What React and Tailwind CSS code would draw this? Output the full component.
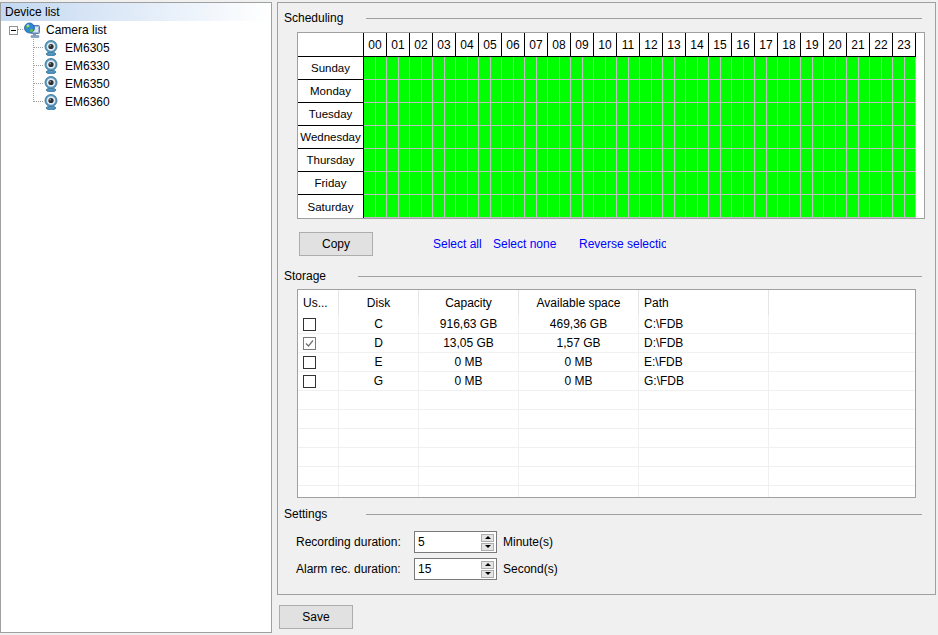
import React from "react";

const HOURS = Array.from({ length: 24 }, (_, i) => String(i).padStart(2, "0"));
const DAYS = ["Sunday", "Monday", "Tuesday", "Wednesday", "Thursday", "Friday", "Saturday"];
const CAMERAS = ["EM6305", "EM6330", "EM6350", "EM6360"];
const DISKS = [
  { used: false, disk: "C", cap: "916,63 GB", avail: "469,36 GB", path: "C:\\FDB" },
  { used: true, disk: "D", cap: "13,05 GB", avail: "1,57 GB", path: "D:\\FDB" },
  { used: false, disk: "E", cap: "0 MB", avail: "0 MB", path: "E:\\FDB" },
  { used: false, disk: "G", cap: "0 MB", avail: "0 MB", path: "G:\\FDB" },
];

// globe + monitor, the "Camera list" node
function NetworkIcon() {
  return (
    <svg width="16" height="16" viewBox="0 0 16 16">
      <rect x="6.5" y="3.5" width="9" height="8" rx="1" fill="#9fb7d6" stroke="#5b7ca6" />
      <rect x="8" y="5" width="6" height="5" fill="#dbe8f7" />
      <rect x="9" y="11.5" width="3" height="2" fill="#7d97ba" />
      <rect x="7" y="13.5" width="8" height="2" rx="0.5" fill="#8aa4c6" stroke="#5b7ca6" strokeWidth="0.5" />
      <circle cx="5.5" cy="6" r="5" fill="#2f86d6" stroke="#1d5fa6" strokeWidth="0.8" />
      <path d="M2.5 3.5 C4 2.5 5.5 3 6 4.5 C5 5.5 3.5 5 3 6.5 C2 6 1.8 4.5 2.5 3.5 Z" fill="#63c23a" />
      <path d="M6.5 7 C8 6.5 9.5 7.5 9 9 C8 10.5 6.5 10.5 6 9.5 Z" fill="#63c23a" />
      <circle cx="4" cy="3.5" r="1.2" fill="#ffffff" opacity="0.5" />
    </svg>
  );
}

function CameraIcon() {
  return (
    <svg width="14" height="16" viewBox="0 0 14 16">
      <ellipse cx="7" cy="14" rx="5" ry="1.8" fill="#4a93c0" stroke="#2b6690" strokeWidth="0.6" />
      <rect x="5.5" y="10.5" width="3" height="3" fill="#7f9bb0" />
      <circle cx="7" cy="6.5" r="6" fill="#5b9cc2" stroke="#356f94" strokeWidth="0.8" />
      <circle cx="7" cy="6.5" r="4.3" fill="#e4ebf0" />
      <circle cx="7" cy="6.5" r="2.6" fill="#2c2f33" />
      <circle cx="6.2" cy="5.7" r="0.8" fill="#9fb5c8" />
    </svg>
  );
}

function TreeLink({ last }) {
  return (
    <svg width="11" height="18" viewBox="0 0 11 18" className="shrink-0">
      <line x1="0.5" y1="0" x2="0.5" y2={last ? 9 : 18} stroke="#a0a0a0" strokeDasharray="1 1" />
      <line x1="1" y1="8.5" x2="11" y2="8.5" stroke="#a0a0a0" strokeDasharray="1 1" />
    </svg>
  );
}

function DeviceTree() {
  return (
    <div className="w-[272px] h-[631px] mt-[2px] border border-[#a0a0a0] bg-white shrink-0">
      <div className="h-[18px] flex items-center pl-[4px] bg-linear-to-r from-[#c3d8f1] to-white">
        Device list
      </div>
      <div className="h-[18px] flex items-center">
        <div className="ml-[8px] w-[9px] h-[9px] border border-[#919191] bg-white flex items-center justify-center">
          <div className="w-[5px] h-px bg-black" />
        </div>
        <svg width="6" height="2" viewBox="0 0 6 2" className="shrink-0">
          <line x1="0" y1="0.5" x2="6" y2="0.5" stroke="#a0a0a0" strokeDasharray="1 1" />
        </svg>
        <NetworkIcon />
        <span className="ml-[6px]">Camera list</span>
      </div>
      {CAMERAS.map((c, i) => (
        <div key={c} className="h-[18px] flex items-center">
          <div className="w-[32px] shrink-0" />
          <TreeLink last={i === CAMERAS.length - 1} />
          <CameraIcon />
          <span className="ml-[7px]">{c}</span>
        </div>
      ))}
    </div>
  );
}

function GroupTitle({ label, width }) {
  return (
    <div className="h-[14px] flex items-center ml-[6px] mr-[13px]">
      <div className={width}>{label}</div>
      <div className="flex-1 h-px bg-[#a0a0a0]" />
    </div>
  );
}

function ScheduleGrid() {
  return (
    <div className="ml-[19px] mt-[7px] w-[628px] h-[187px] border border-[#a0a0a0] bg-white">
      <div className="flex w-[618px] h-[24px] border-b border-black">
        <div className="w-[66px] border-r border-black" />
        {HOURS.map((h) => (
          <div key={h} className="w-[23px] border-r border-black flex items-center justify-center">
            {h}
          </div>
        ))}
      </div>
      {DAYS.map((d, i) => (
        <div key={d} className="flex h-[23px]">
          <div
            className={
              i === DAYS.length - 1
                ? "w-[66px] border-r border-black flex items-center justify-center text-[11.5px]"
                : "w-[66px] border-r border-b border-black flex items-center justify-center text-[11.5px]"
            }
          >
            {d}
          </div>
          <div className="flex border-b border-[#c0c0c0]">
            {HOURS.map((h) => (
              <React.Fragment key={h}>
                <div className="w-[12px] bg-[#00ff00] border-r border-[#c0c0c0]" />
                <div className="w-[11px] bg-[#00ff00] border-r border-[#c0c0c0]" />
              </React.Fragment>
            ))}
          </div>
        </div>
      ))}
    </div>
  );
}

function Checkbox({ checked }) {
  if (checked) {
    return (
      <div className="w-[13px] h-[13px] border border-[#7a7a7a] bg-white flex items-center justify-center">
        <svg width="9" height="9" viewBox="0 0 9 9">
          <path d="M1 4.5 L3.5 7 L8 1.5" fill="none" stroke="#6f6f6f" strokeWidth="1.2" />
        </svg>
      </div>
    );
  }
  return <div className="w-[13px] h-[13px] border border-[#333333] bg-white" />;
}

function StorageTable() {
  const rows = [...DISKS, ...Array.from({ length: 6 }, () => null)];
  return (
    <div className="ml-[19px] mt-[6px] w-[619px] h-[209px] border border-[#a0a0a0] bg-white overflow-hidden">
      <div className="flex h-[25px]">
        <div className="w-[41px] pl-[5px] flex items-center border-r border-[#e5e5e5]">Us...</div>
        <div className="w-[80px] flex items-center justify-center border-r border-[#e5e5e5]">Disk</div>
        <div className="w-[100px] flex items-center justify-center border-r border-[#e5e5e5]">Capacity</div>
        <div className="w-[120px] flex items-center justify-center border-r border-[#e5e5e5]">Available space</div>
        <div className="w-[130px] pl-[5px] flex items-center border-r border-[#e5e5e5]">Path</div>
      </div>
      {rows.map((r, i) => (
        <div key={i} className="flex h-[19px] border-b border-[#f0f0f0]">
          <div className="w-[41px] pl-[5px] flex items-center border-r border-[#f0f0f0]">
            {r && <Checkbox checked={r.used} />}
          </div>
          <div className="w-[80px] flex items-center justify-center border-r border-[#f0f0f0]">{r && r.disk}</div>
          <div className="w-[100px] flex items-center justify-center border-r border-[#f0f0f0]">{r && r.cap}</div>
          <div className="w-[120px] flex items-center justify-center border-r border-[#f0f0f0]">{r && r.avail}</div>
          <div className="w-[130px] pl-[5px] flex items-center border-r border-[#f0f0f0]">{r && r.path}</div>
        </div>
      ))}
    </div>
  );
}

function SpinBox({ value }) {
  return (
    <div className="w-[83px] h-[22px] border border-[#7a7a7a] bg-white flex items-center">
      <span className="flex-1 pl-[3px]">{value}</span>
      <div className="flex flex-col gap-px mr-[2px]">
        <div className="w-[13px] h-[8px] bg-[#e5e5e5] border border-[#adadad] flex items-center justify-center">
          <div className="w-0 h-0 border-x-[3px] border-x-transparent border-b-[3px] border-b-black" />
        </div>
        <div className="w-[13px] h-[8px] bg-[#e5e5e5] border border-[#adadad] flex items-center justify-center">
          <div className="w-0 h-0 border-x-[3px] border-x-transparent border-t-[3px] border-t-black" />
        </div>
      </div>
    </div>
  );
}

function WinButton({ children }) {
  return (
    <button
      type="button"
      className="w-[74px] h-[24px] bg-[#e1e1e1] border border-[#adadad] flex items-center justify-center"
    >
      {children}
    </button>
  );
}

export default function App() {
  return (
    <div className="w-[938px] h-[635px] bg-[#f0f0f0] flex gap-[5px] text-[12px] leading-[14px] text-black font-['Liberation_Sans',Arial,sans-serif] overflow-hidden">
      <DeviceTree />
      <div className="w-[659px] flex flex-col">
        <div className="mt-[2px] h-[593px] border border-[#a0a0a0] flex flex-col">
          <div className="mt-[8px]">
            <GroupTitle label="Scheduling" width="w-[82px]" />
          </div>
          <ScheduleGrid />

          <div className="mt-[13px] ml-[21px] flex items-center">
            <WinButton>Copy</WinButton>
            <div className="ml-[60px] w-[60px] text-[#0000ff] whitespace-nowrap">Select all</div>
            <div className="w-[86px] text-[#0000ff] whitespace-nowrap">Select none</div>
            <div className="w-[87px] text-[#0000ff] whitespace-nowrap overflow-hidden">Reverse selection</div>
          </div>

          <div className="mt-[13px]">
            <GroupTitle label="Storage" width="w-[74px]" />
          </div>
          <StorageTable />

          <div className="mt-[9px]">
            <GroupTitle label="Settings" width="w-[82px]" />
          </div>
          <div className="mt-[10px] ml-[18px] flex items-center">
            <div className="w-[118px]">Recording duration:</div>
            <SpinBox value="5" />
            <div className="ml-[6px]">Minute(s)</div>
          </div>
          <div className="mt-[5px] ml-[18px] flex items-center">
            <div className="w-[118px]">Alarm rec. duration:</div>
            <SpinBox value="15" />
            <div className="ml-[6px]">Second(s)</div>
          </div>
        </div>
        <div className="mt-[10px] ml-[2px]">
          <WinButton>Save</WinButton>
        </div>
      </div>
    </div>
  );
}
